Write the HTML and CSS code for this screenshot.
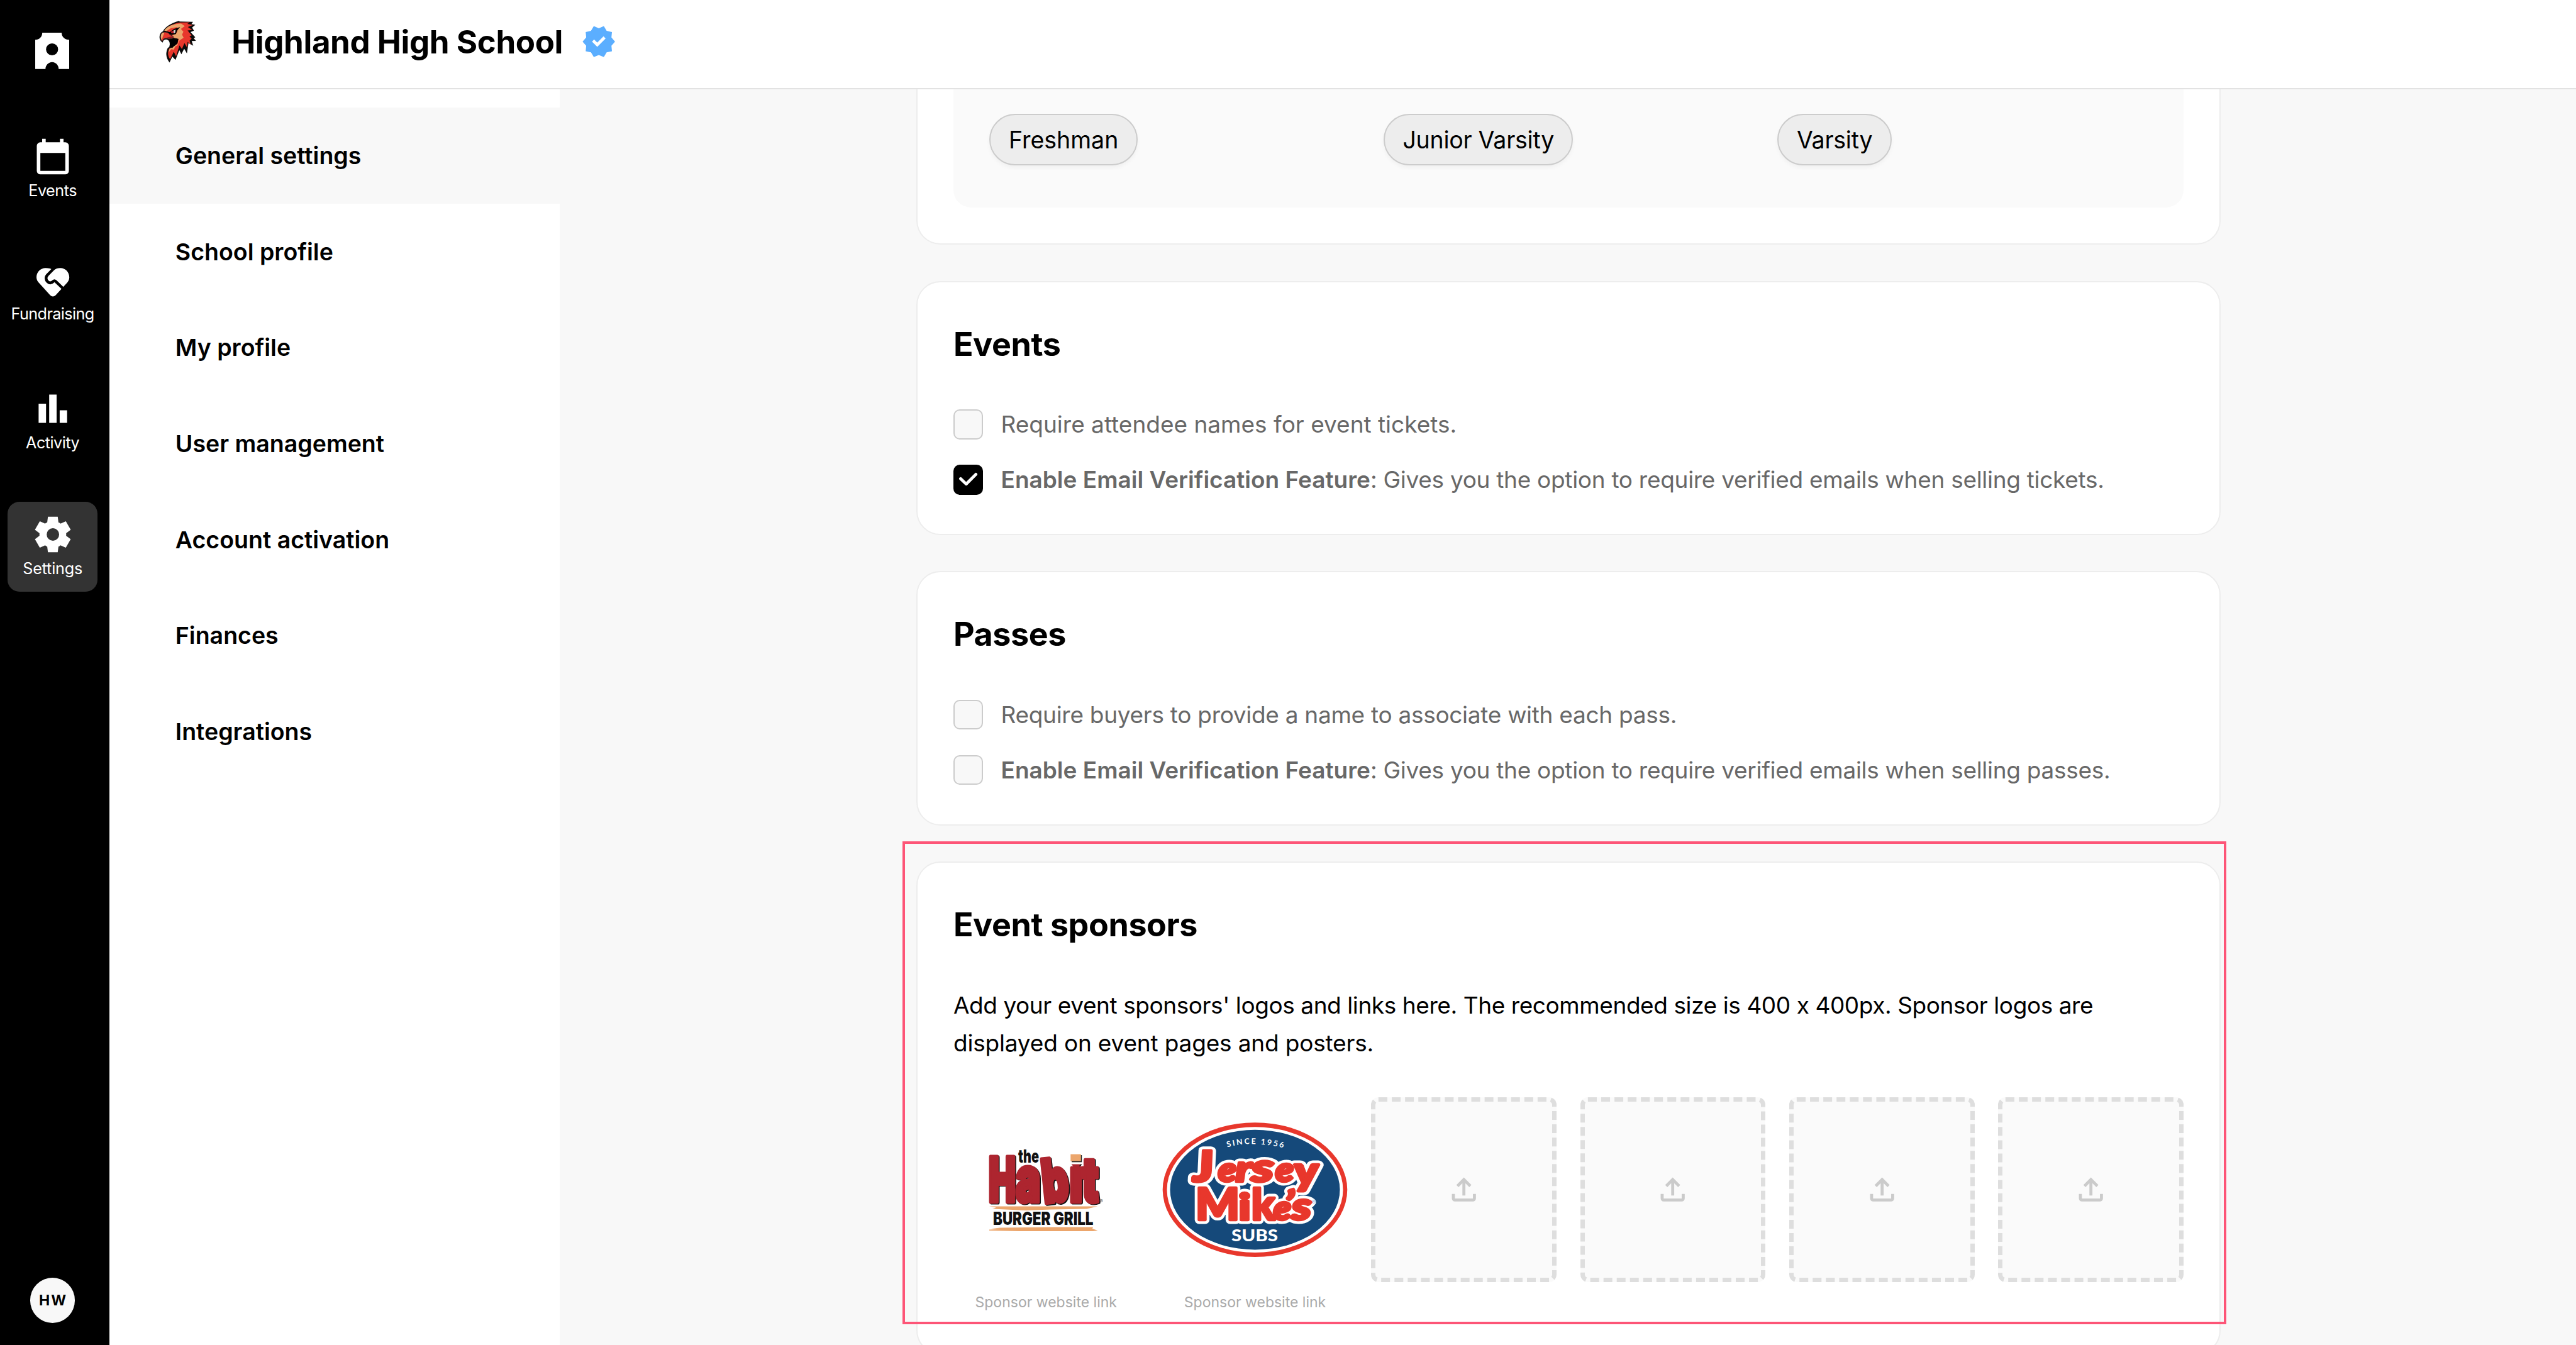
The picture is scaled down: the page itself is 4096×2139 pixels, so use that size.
FILE: index.html
```html
<!DOCTYPE html>
<html lang="en">
<head>
<meta charset="utf-8">
<title>Highland High School</title>
<link rel="stylesheet" href="styles.css">
</head>
<body>
<svg class="defs" width="0" height="0" aria-hidden="true">
  <symbol id="upload" viewBox="0 -960 960 960"><path d="M440-320v-326L336-542l-56-58 200-200 200 200-56 58-104-104v326h-80ZM240-160q-33 0-56.5-23.5T160-240v-120h80v120h480v-120h80v120q0 33-23.5 56.5T720-160H240Z"/></symbol>
</svg>

<nav class="rail">
  <svg class="rail-logo" viewBox="0 0 54 58"><path fill="#fff" fill-rule="evenodd" d="M11.2 0H42c0 6.500 5 11.300 12 11.300V57.700H37.300c0-6-4.600-11-10.400-11s-10.600 5-10.600 11H0V11.300C6.500 11.300 11.200 6.500 11.200 0ZM26.800 16.900a9.600 9.600 0 1 0 0 19.200a9.600 9.600 0 1 0 0-19.200Z"/></svg>
  <div class="rail-items">
    <a class="rail-item">
      <svg class="rail-icon" viewBox="0 -960 960 960"><path d="M200-80q-33 0-56.500-23.500T120-160v-560q0-33 23.500-56.500T200-800h40v-80h80v80h320v-80h80v80h40q33 0 56.500 23.500T840-720v560q0 33-23.500 56.500T760-80H200Zm0-80h560v-400H200v400Z"/></svg>
      <span>Events</span>
    </a>
    <a class="rail-item rail-item-tight">
      <svg class="rail-icon" viewBox="-8 -11 68 68"><path d="M14.600.3C6.300.3 0 6.800 0 15c0 4 2 7 5 10L21.800 43.500Q26 47.500 30.500 43.500L47 25.500C50 22.500 52.200 19.500 52.200 15C52.200 6.800 46 .3 38 .3c-4 0-7.500 1-10.500 3.500C24 1.300 19 .3 14.600.3Z"/><path fill="none" stroke="#000" stroke-width="4.500" d="M31-2.500 17.500 11.200C14 15 15 19.500 17.800 22c3.200 2.800 6.500 2 9-.6q1.700-1.800 3.600 0L44.500 35"/></svg>
      <span>Fundraising</span>
    </a>
    <a class="rail-item">
      <svg class="rail-icon" viewBox="0 0 68 68"><path d="M11.400 25.900h11.800v30.700H11.400zM28.200 11.500H40v45.100H28.200zM44.900 36.500h11.800v20.100H44.900z"/></svg>
      <span>Activity</span>
    </a>
    <a class="rail-item rail-item-active">
      <svg class="rail-icon" viewBox="0 -960 960 960"><path d="m370-80-16-128q-13-5-24.500-12T307-235l-119 50L78-375l103-78q-1-7-1-13.500v-27q0-6.500 1-13.500L78-585l110-190 119 50q11-8 23-15t24-12l16-128h220l16 128q13 5 24.500 12t22.500 15l119-50 110 190-103 78q1 7 1 13.500v27q0 6.500-2 13.500l103 78-110 190-118-50q-11 8-23 15t-24 12L590-80H370Zm112-260q58 0 99-41t41-99q0-58-41-99t-99-41q-59 0-99.500 41T342-480q0 58 40.500 99t99.500 41Z"/></svg>
      <span>Settings</span>
    </a>
  </div>
  <div class="avatar">HW</div>
</nav>

<div class="main">
  <header class="topbar">
    <svg class="mascot" viewBox="0 0 660 600">
      <path fill="#0b0b0b" d="M185 215C200 180 250 145 325 124l8 5 117 3-14 20 34 6-28 24 16 28-30 12 42 46-14 8 20 24-38 2 14 42-42-24-14 92-24-42-25 48-18-35-34 85-28-28-25 52C215 455 203 420 225 365l17-15C250 310 235 288 208 288c-14 2-24 12-26 27C160 305 150 280 155 255c3-20 15-35 30-40Z"/>
      <path fill="#e8372c" d="M200 208C215 180 270 148 335 138l85-2-20 14 48 10-44 18 40 26-42 4 36 44-20 10 20 18-18 18 8 34-26-24-4 52-24-40-22 52-22-32-30 98-20-42-32 66C228 440 222 400 240 368l40-16c24-12 40-40 38-72l-58-10-20-46Z"/>
      <path fill="#eca66c" d="M195 208C220 175 270 150 345 148l32 22-34 24 22 26-12 24 14 28-36 24-20 44-20 12-10 26-24-4-22 28 8-34 40-20 34-26 8-38-42-12-14-22 34-16 12-32-8-22-52 8-40 26Z"/>
      <path fill="#000" d="M242 292l30-10 28 6 20-6-8 42-28 18-18 22-24-16c6-18 8-38 0-56ZM186 212l58 10 38-28 54-16-24 28-14 34-40 8-34-20-30-4Z"/>
      <path fill="#b9202a" d="M252 220l34-14-4 26-22 2Z"/>
      <path fill="#d5d5d5" d="M278 208l18-8-4 30-12 2Z"/>
      <path fill="#e8372c" stroke="#222" stroke-width="5" d="M176 226c28-8 58-2 70 20l30 16-10 20-60-4c-18 2-24 14-26 28-22-20-24-56-4-80Z"/>
      <path fill="#eca66c" d="M178 230c16-6 22 0 12 16-10 16-10 34-16 48-12-20-12-48 4-64Z"/>
      <path fill="#8e1c22" d="M214 272l52-12 6 14-36 10Z"/>
    </svg>
    <h1 class="school">Highland High School</h1>
    <svg class="verified" viewBox="0 -960 960 960"><path d="m344-60-76-128-144-32 14-148-98-112 98-112-14-148 144-32 76-128 136 58 136-58 76 128 144 32-14 148 98 112-98 112 14 148-144 32-76 128-136-58-136 58Zm94-278 226-226-56-58-170 170-86-84-56 56 142 142Z"/></svg>
  </header>

  <div class="body">
    <aside class="subnav">
      <a class="subnav-item subnav-item-active">General settings</a>
      <a class="subnav-item">School profile</a>
      <a class="subnav-item">My profile</a>
      <a class="subnav-item">User management</a>
      <a class="subnav-item">Account activation</a>
      <a class="subnav-item">Finances</a>
      <a class="subnav-item">Integrations</a>
    </aside>

    <main class="content">
      <section class="card card-levels">
        <div class="levels">
          <span class="chip">Freshman</span>
          <span class="chip chip-snug">Junior Varsity</span>
          <span class="chip chip-snug">Varsity</span>
        </div>
      </section>

      <section class="card">
        <h2>Events</h2>
        <div class="options">
          <label class="option"><span class="box"></span><span>Require attendee names for event tickets.</span></label>
          <label class="option"><span class="box box-on"><svg viewBox="0 0 48 48"><path d="M11.500 22.500 20.500 31 36 15.500"/></svg></span><span class="long"><b>Enable Email Verification Feature</b>: Gives you the option to require verified emails when selling tickets.</span></label>
        </div>
      </section>

      <section class="card">
        <h2>Passes</h2>
        <div class="options">
          <label class="option"><span class="box"></span><span class="long">Require buyers to provide a name to associate with each pass.</span></label>
          <label class="option"><span class="box"></span><span class="long"><b>Enable Email Verification Feature</b>: Gives you the option to require verified emails when selling passes.</span></label>
        </div>
      </section>

      <section class="card card-sponsors">
        <h2>Event sponsors</h2>
        <p class="intro">Add your event sponsors' logos and links here. The recommended size is 400 x 400px. Sponsor logos are <span class="intro-end">displayed on event pages and posters.</span></p>
        <div class="sponsors">
          <div class="sponsor">
            <svg class="sponsor-logo" viewBox="0 0 294.7 294.7">
              <defs>
                <g id="habit-i" class="habit-word">
                  <text x="184.500" y="166" font-size="97" textLength="21" lengthAdjust="spacingAndGlyphs">i</text>
                </g>
                <g id="habit" class="habit-word">
                  <text x="56" y="166" font-size="97" textLength="43" lengthAdjust="spacingAndGlyphs">H</text>
                  <text x="99" y="166" font-size="99" textLength="39.500" lengthAdjust="spacingAndGlyphs">a</text>
                  <text x="144" y="168" font-size="95" textLength="42" lengthAdjust="spacingAndGlyphs" transform="rotate(-6 144 168)">b</text>
                  <text x="204" y="166" font-size="98" textLength="27" lengthAdjust="spacingAndGlyphs">t</text>
                </g>
              </defs>
              <use href="#habit-i" x="1.500" y="1.500" fill="#111" stroke="#111"/>
              <use href="#habit-i" fill="#ad252f" stroke="#ad252f"/>
              <path fill="#fff" d="M182 82h27v24.500h-27z"/>
              <path fill="#222" d="M188 92h16.200v11.300h-16.200z"/>
              <path fill="#eca66c" d="M186.300 90.600h16.500v11h-16.500z"/>
              <use href="#habit" x="1.500" y="1.500" fill="#111" stroke="#111"/>
              <use href="#habit" fill="#ad252f" stroke="#ad252f"/>
              <text class="habit-black" x="103" y="104" font-size="29" textLength="33" lengthAdjust="spacingAndGlyphs">the</text>
              <path fill="#eca66c" d="M57 173.500H229.500L212 177.500 155 178.500 115 180 62 177.500 68 175.500ZM57 210.500 76 209.500 60 209 74 207.500 157 206.500 190 206.500H222L221 209 229.500 212 222 213H105L57 212Z"/>
              <text class="habit-black" x="63" y="203.200" font-size="28" textLength="159.500" lengthAdjust="spacingAndGlyphs">BURGER GRILL</text>
              <text class="habit-reg" x="232.500" y="168.500" font-size="8">®</text>
            </svg>
            <span class="sponsor-link">Sponsor website link</span>
          </div>
          <div class="sponsor">
            <svg class="sponsor-logo" viewBox="0 0 294.7 294.7">
              <defs>
                <path id="since-arc" d="M103.500 79.500Q150 66 216 87"/>
                <g id="jersey" class="jersey-word">
                  <text transform="translate(50 134) skewX(6)" font-size="68" textLength="34" lengthAdjust="spacingAndGlyphs">J</text>
                  <text x="89" y="134.500" font-size="53" textLength="29" lengthAdjust="spacingAndGlyphs">e</text>
                  <text x="117" y="134.500" font-size="58" textLength="25" lengthAdjust="spacingAndGlyphs">r</text>
                  <text x="142" y="134.500" font-size="62" textLength="35" lengthAdjust="spacingAndGlyphs">s</text>
                  <text x="180" y="134.500" font-size="53" textLength="29" lengthAdjust="spacingAndGlyphs">e</text>
                  <text transform="translate(212 139) skewX(6)" font-size="62" textLength="38" lengthAdjust="spacingAndGlyphs">y</text>
                  <text class="upright" x="53" y="195" font-size="70" textLength="70" lengthAdjust="spacingAndGlyphs">M</text>
                  <text class="upright" x="121.500" y="195" font-size="58" textLength="19" lengthAdjust="spacingAndGlyphs">i</text>
                  <text class="upright" x="142" y="195" font-size="69" textLength="37" lengthAdjust="spacingAndGlyphs">k</text>
                  <text x="177" y="195" font-size="54" textLength="28" lengthAdjust="spacingAndGlyphs">e</text>
                  <text x="195" y="190" font-size="58" textLength="14" lengthAdjust="spacingAndGlyphs">’</text>
                  <text x="206" y="195" font-size="61" textLength="31" lengthAdjust="spacingAndGlyphs">s</text>
                </g>
              </defs>
              <ellipse cx="147.500" cy="147.100" rx="146.800" ry="106.900" fill="#e8372c"/>
              <ellipse cx="147.500" cy="147.100" rx="140" ry="99.800" fill="#fff"/>
              <ellipse cx="147.500" cy="147.100" rx="135" ry="95.300" fill="#15497a"/>
              <text class="since"><textPath href="#since-arc">SINCE 1956</textPath></text>
              <use href="#jersey" fill="#fff" stroke="#fff" stroke-width="13"/>
              <use href="#jersey" fill="#e8372c" stroke="#e8372c" stroke-width="4.500"/>
              <text class="subs" x="110" y="229" textLength="74" lengthAdjust="spacingAndGlyphs">SUBS</text>
              <text class="jersey-reg" x="238" y="170" font-size="9">®</text>
            </svg>
            <span class="sponsor-link">Sponsor website link</span>
          </div>
          <div class="slot"><svg><use href="#upload"/></svg></div>
          <div class="slot"><svg><use href="#upload"/></svg></div>
          <div class="slot"><svg><use href="#upload"/></svg></div>
          <div class="slot"><svg><use href="#upload"/></svg></div>
        </div>
      </section>
    </main>
  </div>
</div>
<div class="highlight"></div>
</body>
</html>
```
FILE: styles.css
```css
* { box-sizing: border-box; }

body {
  margin: 0;
  width: 4096px;
  height: 2139px;
  overflow: hidden;
  position: relative;
  display: flex;
  background: #f8f8f8;
  color: #000;
  font-family: Inter, "Liberation Sans", sans-serif;
}

h1, h2, p { margin: 0; }
.defs { position: absolute; }

/* Left rail */
.rail {
  width: 174.300px;
  height: 100%;
  flex: none;
  background: #000;
  padding: 51.800px 0 35.500px 12px;
  display: flex;
  flex-direction: column;
}
.rail-logo { width: 54px; height: 58px; margin-left: 44.200px; flex: none; }
.rail-items { display: flex; flex-direction: column; gap: 57.400px; margin-top: 87.500px; }
.rail-item {
  width: 143.300px;
  height: 143px;
  border-radius: 19px;
  padding-top: 17.500px;
  display: flex;
  flex-direction: column;
  align-items: center;
  gap: 5px;
  color: #fff;
  font-size: 25.200px;
  line-height: 30px;
  letter-spacing: -0.500px;
}
.rail-item-tight { gap: 1px; letter-spacing: -0.600px; }
.rail-item-active { background: #333; letter-spacing: -0.200px; }
.rail-icon { width: 68px; height: 68px; fill: #fff; flex: none; }
.avatar {
  width: 71.700px;
  height: 71.700px;
  margin: auto 0 0 35.700px;
  border-radius: 50%;
  background: #f8f8f8;
  display: flex;
  align-items: center;
  justify-content: center;
  padding-left: 2px;
  font-size: 23px;
  font-weight: 700;
  letter-spacing: 2px;
}

/* Main column */
.main { flex: 1; min-width: 0; display: flex; flex-direction: column; }
.topbar {
  height: 142px;
  flex: none;
  background: #fff;
  border-bottom: 2px solid #e2e2e2;
  padding: 0 0 7px 52.200px;
  display: flex;
  align-items: center;
}
.mascot { width: 118.700px; height: 107.900px; margin: -3px 23px 0 0; }
.school { font-size: 51px; line-height: 60px; font-weight: 700; letter-spacing: -0.400px; white-space: nowrap; }
.verified { width: 56.300px; height: 56.300px; margin-left: 29.500px; fill: #5baeff; }

.body { flex: 1; min-height: 0; display: flex; }
.subnav { width: 715.500px; flex: none; background: #fff; padding-top: 29px; }
.subnav-item {
  height: 152.700px;
  padding-left: 104.500px;
  display: flex;
  align-items: center;
  font-size: 37.500px;
  font-weight: 600;
}
.subnav-item-active { background: #f8f8f8; }

.content {
  flex: 1;
  display: flex;
  flex-direction: column;
  align-items: center;
  gap: 57.500px;
  padding-left: 2px;
  overflow: hidden;
}
.card {
  width: 2074px;
  height: 404.300px;
  flex: none;
  background: #fff;
  border: 2px solid #ededed;
  border-radius: 38px;
  padding: 68px 57px 0;
}
.card-levels {
  height: 247px;
  padding-top: 0;
  border-top: 0;
  border-radius: 0 0 38px 38px;
}
.card-sponsors { height: 784px; }

.levels {
  height: 187.700px;
  padding: 38.800px 0 0 57.500px;
  border-radius: 0 0 28px 28px;
  background: #fafafa;
  display: grid;
  grid-template-columns: repeat(3, 626.500px);
  justify-items: start;
  align-items: start;
}
.chip {
  height: 82px;
  padding: 0 28.500px;
  border: 2px solid #ccc;
  border-radius: 41px;
  background: #ededed;
  box-shadow: 0 4px 6px rgba(0, 0, 0, 0.040);
  font-size: 37.500px;
  line-height: 79px;
}
.chip-snug { letter-spacing: -0.250px; }

.card h2 { font-size: 52px; line-height: 62px; font-weight: 700; letter-spacing: -0.420px; }
.options { display: flex; flex-direction: column; gap: 40.500px; margin-top: 72.500px; }
.option {
  height: 47.600px;
  display: flex;
  align-items: center;
  gap: 28px;
  font-size: 37px;
  line-height: 46px;
  color: #686868;
  white-space: nowrap;
}
.option b { font-weight: 600; letter-spacing: 0; }
.long { letter-spacing: -0.290px; }
.box {
  width: 47.600px;
  height: 47.600px;
  border: 2px solid #ccc;
  border-radius: 10px;
  background: #f8f8f8;
  flex: none;
}
.box-on { background: #000; border: 0; }
.box-on svg { display: block; width: 100%; height: 100%; }
.box-on path { fill: none; stroke: #fff; stroke-width: 4.800; stroke-linecap: round; stroke-linejoin: round; }

.intro { margin-top: 66.500px; font-size: 37px; line-height: 60px; letter-spacing: -0.420px; }
.intro-end { letter-spacing: -0.170px; }
.sponsors {
  margin-top: 56px;
  display: grid;
  grid-template-columns: repeat(6, 294.700px);
  column-gap: 37.600px;
}
.sponsor { display: flex; flex-direction: column; align-items: center; gap: 17px; }
.sponsor-logo { width: 294.700px; height: 294.700px; }
.sponsor-link { font-size: 23px; line-height: 30px; color: #aaa; white-space: nowrap; }
.slot {
  height: 294.700px;
  border: 7px dashed #dedede;
  border-radius: 12px;
  background: #fafafa;
  display: flex;
  align-items: center;
  justify-content: center;
}
.slot svg { width: 57.400px; height: 57.400px; fill: #cbcbcb; }

/* Sponsor lettering */
.habit-word { font-family: Inter, sans-serif; font-weight: 900; stroke-width: 7; stroke-linejoin: round; }
.habit-black { font-family: Inter, sans-serif; font-weight: 900; fill: #111; }
.habit-reg { fill: #555; }
.jersey-word { font-family: Lato, sans-serif; font-weight: 900; font-style: italic; stroke-linejoin: round; }
.upright { font-style: normal; }
.since { font: 700 12.500px Lato, sans-serif; fill: #fff; letter-spacing: 2.500px; }
.subs { font: 900 27px Lato, sans-serif; fill: #fff; }
.jersey-reg { fill: #8fb8e6; }

/* Callout drawn over the sponsors card */
.highlight {
  position: absolute;
  left: 1435px;
  top: 1338px;
  width: 2105px;
  height: 768px;
  border: 4px solid #fd5577;
}
```
